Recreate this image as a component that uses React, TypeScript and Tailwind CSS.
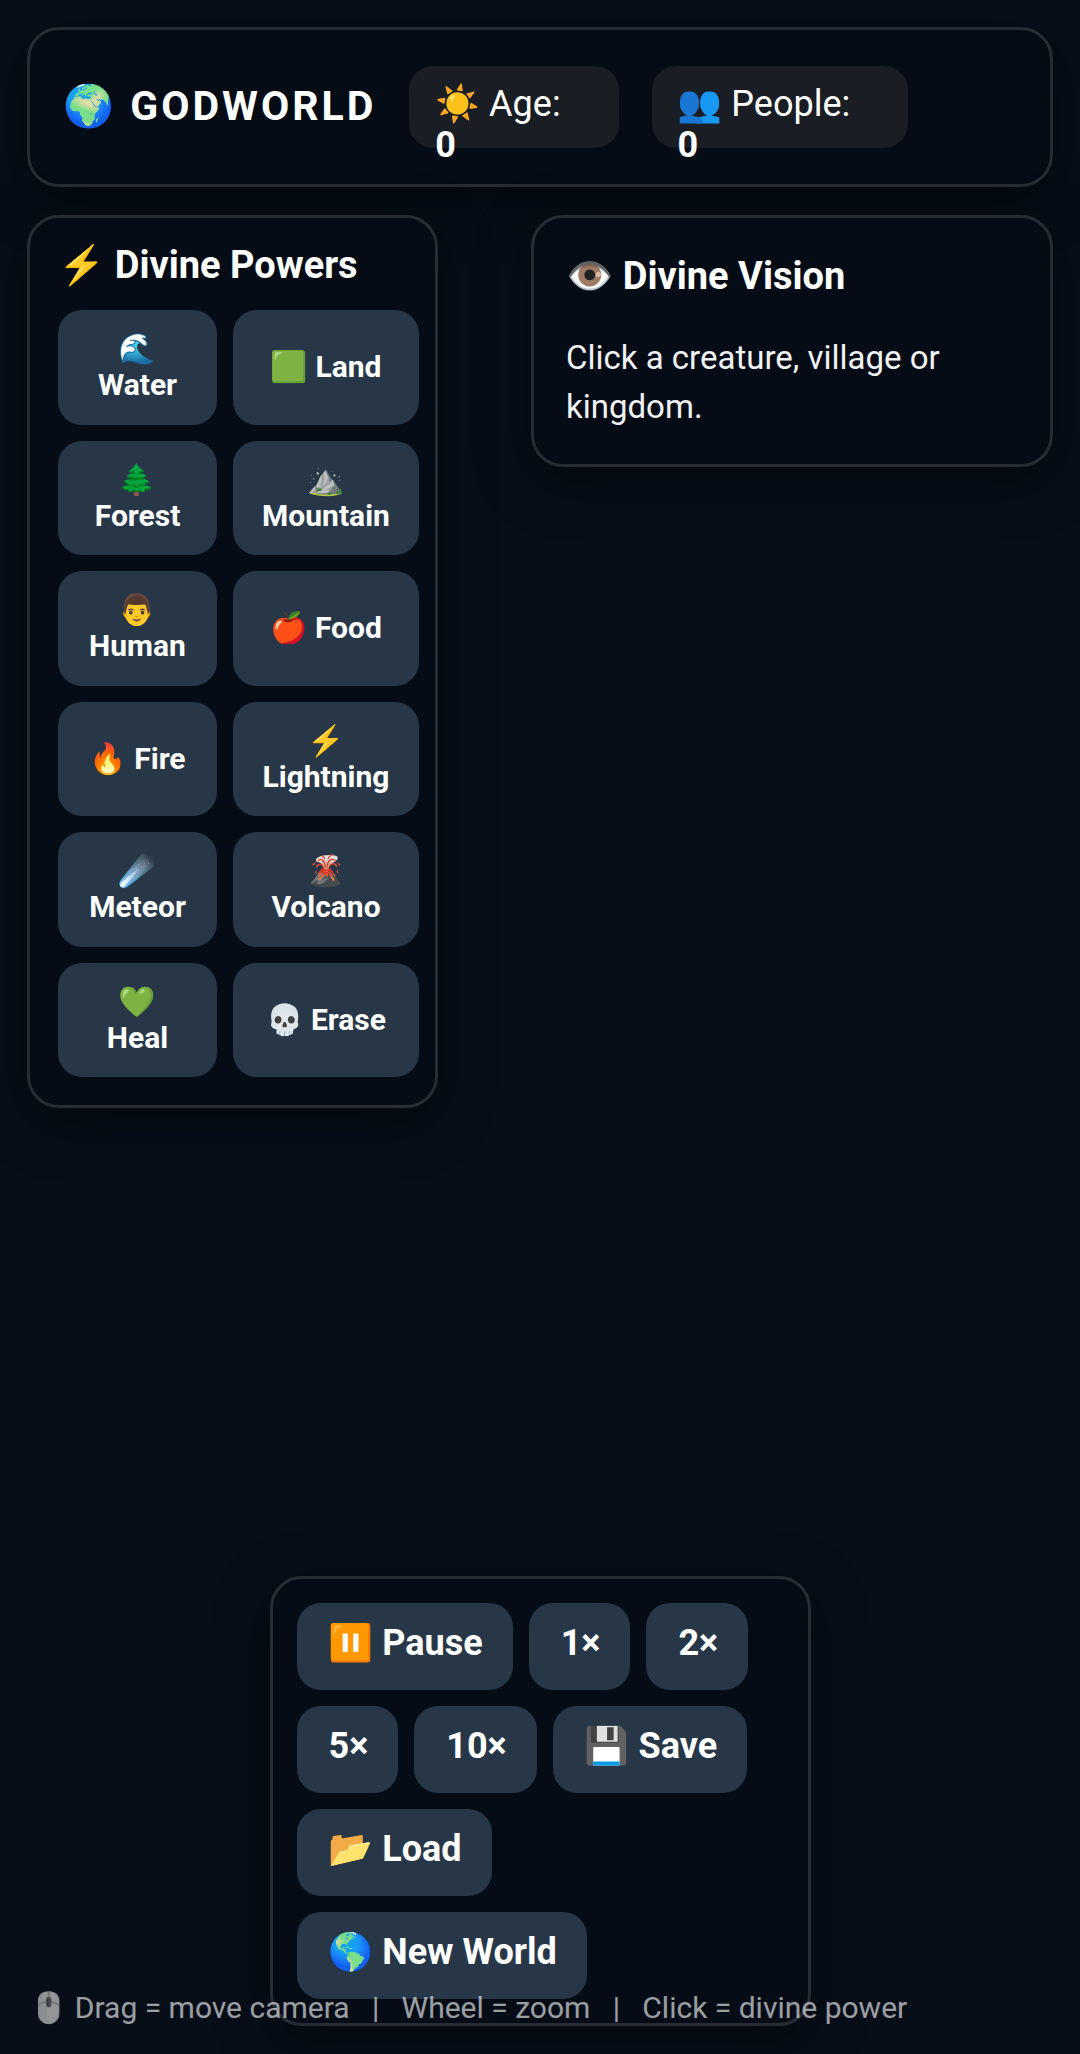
import { useState } from "react";

const powers = [
  { icon: "🌊", name: "Water" },
  { icon: "🟩", name: "Land" },
  { icon: "🌲", name: "Forest" },
  { icon: "⛰️", name: "Mountain" },
  { icon: "👨", name: "Human" },
  { icon: "🍎", name: "Food" },
  { icon: "🔥", name: "Fire" },
  { icon: "⚡", name: "Lightning" },
  { icon: "☄️", name: "Meteor" },
  { icon: "🌋", name: "Volcano" },
  { icon: "💚", name: "Heal" },
  { icon: "💀", name: "Erase" },
];

const controls = ["⏸️ Pause", "1×", "2×", "5×", "10×", "💾 Save", "📂 Load", "🌎 New World"];

const panel =
  "rounded-[32px] border-3 border-[#282c33] bg-[#050c15] shadow-[0_14px_56px_rgba(0,0,0,0.35)]";

const Stat = ({ label, value }: { label: string; value: number }) => (
  <div className="h-[82px] rounded-3xl bg-[#1a1d24] pl-[26px] pr-[58px] pt-[18px] text-[36px] leading-[41px] whitespace-nowrap">
    {label}
    <b className="block">{value}</b>
  </div>
);

const App = () => {
  const [, setPower] = useState("Water");

  return (
    <div className="relative flex min-h-screen flex-col bg-[#070e18] px-[27px] pt-[27px] pb-7 font-[Roboto,'Noto_Color_Emoji',sans-serif] text-white">
      <header className={`${panel} flex h-40 items-center gap-[33px] px-[33px]`}>
        <h1 className="text-[41px] font-bold tracking-[3px] whitespace-nowrap">🌍 GODWORLD</h1>
        <div className="flex gap-[33px]">
          <Stat label="☀️ Age:" value={0} />
          <Stat label="👥 People:" value={0} />
        </div>
      </header>

      <main className="mt-7 flex items-start justify-between">
        <section className={`${panel} px-7 pt-6 pb-7`}>
          <h2 className="mb-[22px] text-[38px] leading-[46px] font-bold">⚡ Divine Powers</h2>
          <div className="-mr-3 grid h-[767px] grid-cols-[159px_186px] grid-rows-6 gap-x-4 gap-y-4">
            {powers.map((power) => (
              <button
                key={power.name}
                type="button"
                onClick={() => setPower(power.name)}
                className="rounded-3xl bg-[#283747] px-7 text-[30px] leading-9 font-bold"
              >
                {power.icon} {power.name}
              </button>
            ))}
          </div>
        </section>

        <section className={`${panel} w-[522px] px-8 pt-[35px] pb-[33px]`}>
          <h2 className="text-[38px] leading-[46px] font-bold">👁️ Divine Vision</h2>
          <p className="mt-[34px] text-[33px] leading-[49px] text-[#f0f1f2]">
            Click a creature, village or kingdom.
          </p>
        </section>
      </main>

      <section className={`${panel} mx-auto mt-auto w-[541px] p-6`}>
        <div className="flex flex-wrap gap-x-4 gap-y-4">
          {controls.map((label) => (
            <button
              key={label}
              type="button"
              className="h-[87px] rounded-3xl bg-[#283747] pr-[30px] pb-2 pl-8 text-[36px] font-bold whitespace-nowrap"
            >
              {label}
            </button>
          ))}
        </div>
      </section>

      <p className="absolute bottom-7 left-[30px] text-[30px] leading-9 whitespace-pre opacity-60">
        🖱️ Drag = move camera &nbsp; | &nbsp; Wheel = zoom &nbsp; | &nbsp; Click = divine power
      </p>
    </div>
  );
};

export default App;
